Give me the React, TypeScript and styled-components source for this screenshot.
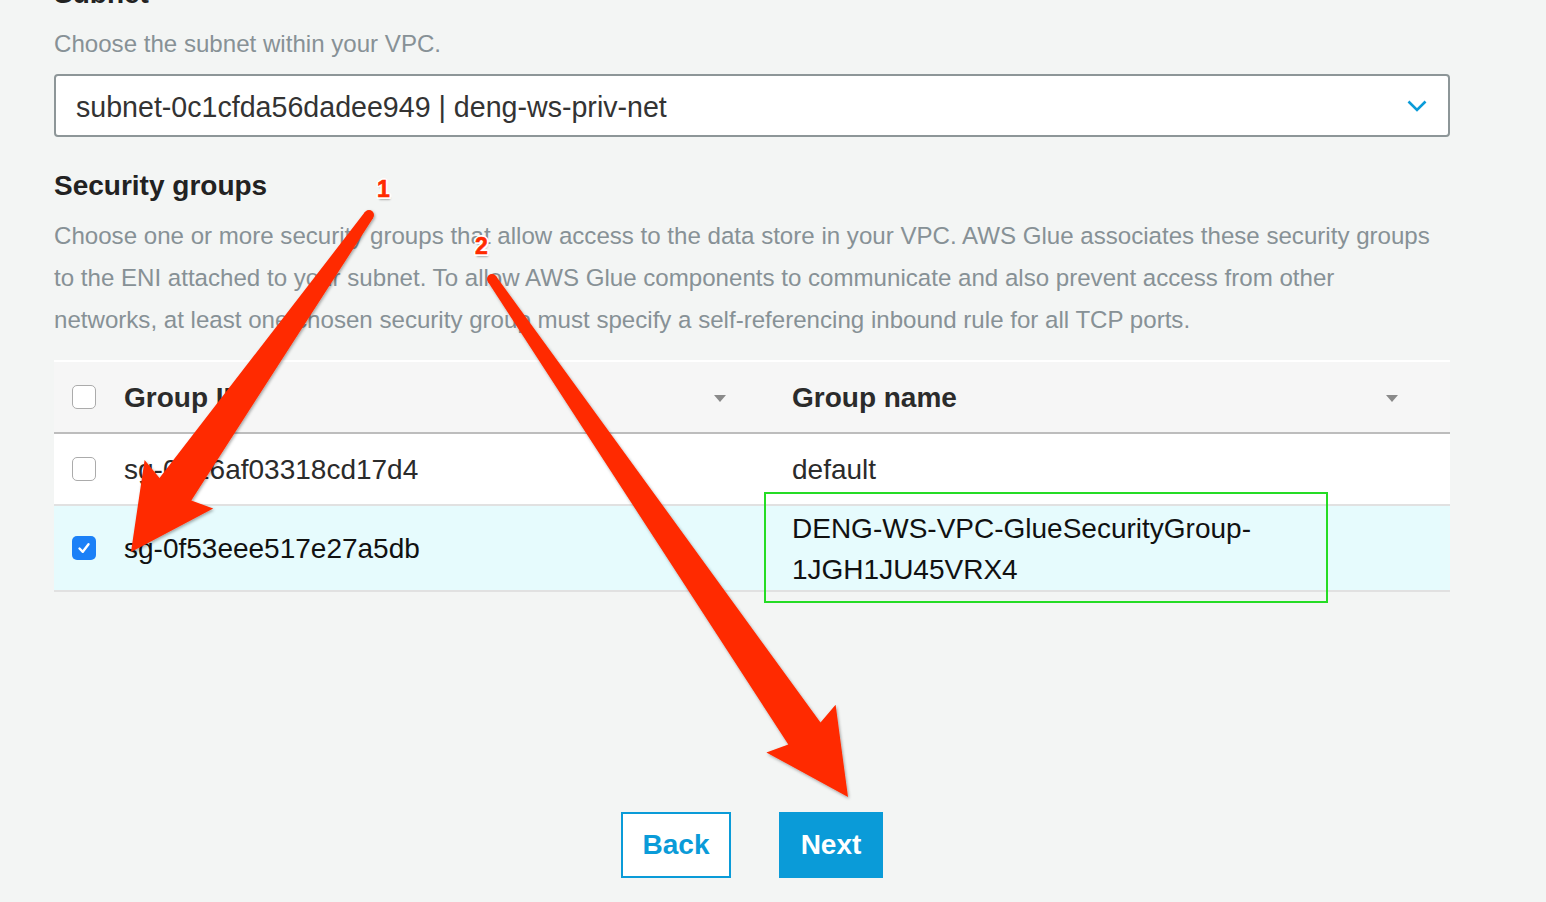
import React from "react";
import styled, { createGlobalStyle } from "styled-components";

const GlobalStyle = createGlobalStyle`
  html, body { margin: 0; padding: 0; background: #f3f5f4; }
  body { font-family: "Liberation Sans", Arial, Helvetica, sans-serif; }
  * { box-sizing: border-box; }
`;

const Root = styled.div`
  position: relative;
  width: 1546px;
  height: 902px;
  overflow: hidden;
  background: #f3f5f4;
`;

const Page = styled.main`
  width: 1396px;
  margin: -23px 0 0 54px;
  display: flex;
  flex-direction: column;
`;

const SectionTitle = styled.h2<{ $gap?: number }>`
  margin: ${(p) => p.$gap ?? 0}px 0 0;
  font-size: 28px;
  line-height: 34px;
  font-weight: 700;
  color: #222;
`;

const Description = styled.p`
  margin: 12px 0 0;
  font-size: 24.1px;
  line-height: 42px;
  color: #879196;
  white-space: nowrap;
`;

const SelectBox = styled.div`
  margin-top: 9px;
  height: 63px;
  border: 2px solid #8d9698;
  border-radius: 4px;
  background: #fff;
  display: flex;
  align-items: center;
  justify-content: space-between;
  padding: 3px 21px 0 20px;
  font-size: 28.6px;
  color: #333;
`;

const ChevronWrap = styled.span`
  display: flex;
  margin-top: -3px;
`;

const Table = styled.div`
  margin-top: 19px;
  border-top: 2px solid #fff;
  display: flex;
  flex-direction: column;
`;

const Row = styled.div<{ $variant: "head" | "plain" | "selected" }>`
  display: grid;
  grid-template-columns: 56px 668px 1fr;
  align-items: center;
  min-height: 72px;
  font-size: 28px;
  line-height: 40.5px;
  background: ${(p) =>
    p.$variant === "head" ? "#f6f6f6" : p.$variant === "selected" ? "#e6fbfd" : "#fff"};
  border-bottom: 2px solid ${(p) => (p.$variant === "head" ? "#bdbdbd" : "#e1e1e1")};
  color: ${(p) => (p.$variant === "selected" ? "#111" : "#2b2b2b")};
  font-weight: ${(p) => (p.$variant === "head" ? 700 : 400)};
`;

const CheckCell = styled.div`
  padding-left: 18px;
  display: flex;
  align-items: center;
`;

const Cell = styled.div`
  padding: 3px 52px 0 14px;
  display: flex;
  align-items: center;
  justify-content: space-between;
`;

const SortCaret = styled.span`
  width: 0;
  height: 0;
  border-left: 6px solid transparent;
  border-right: 6px solid transparent;
  border-top: 7px solid #8a8a8a;
`;

const Box = styled.span<{ $checked?: boolean }>`
  width: 24px;
  height: 24px;
  border-radius: 5px;
  border: ${(p) => (p.$checked ? "none" : "1.5px solid #ababab")};
  background: ${(p) => (p.$checked ? "#1b80f7" : "#fff")};
  display: flex;
  align-items: center;
  justify-content: center;
`;

const ButtonBar = styled.div`
  margin-top: 220px;
  display: flex;
  justify-content: center;
  gap: 48px;
`;

const Button = styled.button<{ $primary?: boolean; $w: number }>`
  width: ${(p) => p.$w}px;
  height: 66px;
  border: 2px solid #0a9bd8;
  background: ${(p) => (p.$primary ? "#0a9bd8" : "#fff")};
  color: ${(p) => (p.$primary ? "#fff" : "#0a9bd8")};
  font-family: "Liberation Sans", Arial, sans-serif;
  font-size: 28px;
  font-weight: 700;
  padding: 0;
  cursor: pointer;
`;

const Overlay = styled.svg`
  position: absolute;
  left: 0;
  top: 0;
  pointer-events: none;
`;

const Highlight = styled.div`
  position: absolute;
  left: 764px;
  top: 492px;
  width: 564px;
  height: 111px;
  border: 2px solid #25dc25;
  pointer-events: none;
`;

const StepLabel = styled.span<{ $x: number; $y: number }>`
  position: absolute;
  left: ${(p) => p.$x}px;
  top: ${(p) => p.$y}px;
  font-size: 23px;
  line-height: 23px;
  font-weight: 700;
  color: #ff2a00;
  -webkit-text-stroke: 0.6px #ff2a00;
  text-shadow: -2px 0 #fff, 2px 0 #fff, 0 -2px #fff, 0 2px #fff, 1.5px 1.5px #fff,
    -1.5px -1.5px #fff, 1.5px -1.5px #fff, -1.5px 1.5px #fff, 1px 3px 2px rgba(0, 0, 0, 0.3);
`;

type Pt = [number, number];

function arrowPoints(t: Pt, p: Pt): string {
  const dx = p[0] - t[0];
  const dy = p[1] - t[1];
  const L = Math.hypot(dx, dy);
  const d: Pt = [dx / L, dy / L];
  const n: Pt = [-d[1], d[0]];
  const at = (back: number, side: number): Pt => [
    p[0] - d[0] * back + n[0] * side,
    p[1] - d[1] * back + n[1] * side,
  ];
  const pts: Pt[] = [
    p,
    at(83, 42),
    at(77, 19.5),
    [t[0] + n[0] * 5, t[1] + n[1] * 5],
    [t[0] - n[0] * 5, t[1] - n[1] * 5],
    at(77, -19.5),
    at(83, -42),
  ];
  return pts.map((q) => q.map((v) => v.toFixed(1)).join(",")).join(" ");
}

const ARROWS: { t: Pt; p: Pt }[] = [
  { t: [369, 215], p: [131, 552] },
  { t: [492, 279], p: [848, 797] },
];

const Chevron = () => (
  <svg width="20" height="12" viewBox="0 0 20 12">
    <polyline points="1.5,1.5 10,10 18.5,1.5" fill="none" stroke="#0a9bd8" strokeWidth="2.6" />
  </svg>
);

const CheckMark = () => (
  <svg width="16" height="16" viewBox="0 0 16 16">
    <polyline
      points="3.5,8.5 6.8,11.8 12.5,4.2"
      fill="none"
      stroke="#fff"
      strokeWidth="2.4"
      strokeLinecap="round"
      strokeLinejoin="round"
    />
  </svg>
);

const rows = [
  { id: "sg-0a26af03318cd17d4", name: "default", checked: false },
  { id: "sg-0f53eee517e27a5db", name: "DENG-WS-VPC-GlueSecurityGroup-1JGH1JU45VRX4", checked: true },
];

export default function App() {
  return (
    <Root>
      <GlobalStyle />
      <Page>
        <SectionTitle>Subnet</SectionTitle>
        <Description>Choose the subnet within your VPC.</Description>
        <SelectBox>
          <span>subnet-0c1cfda56dadee949 | deng-ws-priv-net</span>
          <ChevronWrap>
            <Chevron />
          </ChevronWrap>
        </SelectBox>

        <SectionTitle $gap={32}>Security groups</SectionTitle>
        <Description>
          Choose one or more security groups that allow access to the data store in your VPC. AWS Glue
          associates these security groups
          <br />
          to the ENI attached to your subnet. To allow AWS Glue components to communicate and also
          prevent access from other
          <br />
          networks, at least one chosen security group must specify a self-referencing inbound rule for
          all TCP ports.
        </Description>

        <Table>
          <Row $variant="head">
            <CheckCell>
              <Box />
            </CheckCell>
            <Cell>
              <span>Group ID</span>
              <SortCaret />
            </Cell>
            <Cell>
              <span>Group name</span>
              <SortCaret />
            </Cell>
          </Row>
          {rows.map((r) => (
            <Row key={r.id} $variant={r.checked ? "selected" : "plain"}>
              <CheckCell>
                <Box $checked={r.checked}>{r.checked && <CheckMark />}</Box>
              </CheckCell>
              <Cell>
                <span>{r.id}</span>
              </Cell>
              <Cell>
                <span>{r.name}</span>
              </Cell>
            </Row>
          ))}
        </Table>

        <ButtonBar>
          <Button $w={110}>Back</Button>
          <Button $w={104} $primary>
            Next
          </Button>
        </ButtonBar>
      </Page>

      <Highlight />
      <Overlay width="1546" height="902" viewBox="0 0 1546 902">
        <defs>
          <filter id="arrowShadow" x="-10%" y="-10%" width="120%" height="120%">
            <feDropShadow dx="1" dy="1.5" stdDeviation="1.5" floodColor="#000" floodOpacity="0.35" />
          </filter>
        </defs>
        {ARROWS.map((a, i) => (
          <g key={i} fill="#ff2a00" filter="url(#arrowShadow)">
            <polygon points={arrowPoints(a.t, a.p)} />
            <circle cx={a.t[0]} cy={a.t[1]} r={5} />
          </g>
        ))}
      </Overlay>
      <StepLabel $x={377} $y={178}>1</StepLabel>
      <StepLabel $x={475} $y={235}>2</StepLabel>
    </Root>
  );
}
